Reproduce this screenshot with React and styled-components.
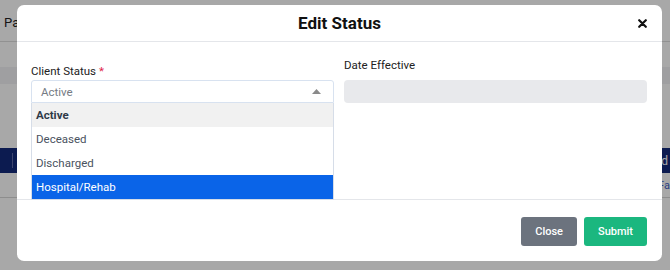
import React, { useState } from "react";
import styled, { createGlobalStyle } from "styled-components";

const GlobalStyle = createGlobalStyle`
  html, body {
    margin: 0;
    padding: 0;
    width: 670px;
    height: 270px;
    overflow: hidden;
    font-family: Roboto, "Liberation Sans", sans-serif;
  }
`;

const options = ["Active", "Deceased", "Discharged", "Hospital/Rehab"];

const App = () => {
  const [status] = useState("Active");
  const [hovered, setHovered] = useState("Hospital/Rehab");

  return (
    <Screen>
      <GlobalStyle />
      <BackPage>
        <TopBar>
          <BackTab>Pa</BackTab>
        </TopBar>
        <FilterBand />
        <Spacer />
        <TableHead>
          <HeadDivider />
          <HeadEnd>d</HeadEnd>
        </TableHead>
        <LinkRow>
          <LinkText>Fa</LinkText>
        </LinkRow>
      </BackPage>

      <Overlay>
        <Modal>
          <Header>
            <Title>Edit Status</Title>
            <CloseX aria-label="close">
              <svg width="9" height="9" viewBox="0 0 9 9">
                <path
                  d="M1.2 1.2 L7.8 7.8 M7.8 1.2 L1.2 7.8"
                  stroke="#111"
                  strokeWidth="2.2"
                  strokeLinecap="round"
                />
              </svg>
            </CloseX>
          </Header>
          <Body>
            <Field>
              <Label $offset={6}>
                Client Status <Required>*</Required>
              </Label>
              <SelectWrap>
                <SelectBox>
                  <span>{status}</span>
                  <svg width="9" height="5" viewBox="0 0 9 5">
                    <path d="M0 5 L4.5 0 L9 5 Z" fill="#8a8a8a" />
                  </svg>
                </SelectBox>
                <Menu>
                  {options.map((opt) => (
                    <Option
                      key={opt}
                      $selected={opt === status}
                      $active={opt === hovered}
                      onMouseEnter={() => setHovered(opt)}
                    >
                      {opt}
                    </Option>
                  ))}
                </Menu>
              </SelectWrap>
            </Field>
            <Field>
              <Label>Date Effective</Label>
              <DisabledInput disabled />
            </Field>
          </Body>
          <Footer>
            <Button $tone="#6c737e">Close</Button>
            <Button $tone="#1bb77f">Submit</Button>
          </Footer>
        </Modal>
      </Overlay>
    </Screen>
  );
};

const Screen = styled.div`
  position: relative;
  width: 670px;
  height: 270px;
  background: #ffffff;
  overflow: hidden;
`;

const BackPage = styled.div`
  display: flex;
  flex-direction: column;
  height: 100%;
`;

const TopBar = styled.div`
  height: 37px;
  display: flex;
  align-items: center;
  padding-left: 4px;
  border-bottom: 1px solid #dcdcdc;
  margin-top: 4px;
`;

const BackTab = styled.span`
  font-size: 13px;
  color: #222;
`;

const FilterBand = styled.div`
  height: 17px;
  margin-top: 25px;
  background: #f2f2f4;
`;

const Spacer = styled.div`
  height: 64px;
`;

const TableHead = styled.div`
  height: 25px;
  background: #13297a;
  display: flex;
  align-items: center;
  justify-content: space-between;
`;

const HeadDivider = styled.span`
  width: 1px;
  height: 15px;
  margin-left: 12px;
  background: #5d6aa8;
`;

const HeadEnd = styled.span`
  color: #fff;
  font-size: 12px;
  padding-right: 2px;
`;

const LinkRow = styled.div`
  height: 24px;
  display: flex;
  justify-content: flex-end;
  align-items: center;
  border-bottom: 1px solid #d6d6d6;
`;

const LinkText = styled.span`
  font-size: 11px;
  color: #3f63c6;
`;

const Overlay = styled.div`
  position: absolute;
  inset: 0;
  background: rgba(0, 0, 0, 0.34);
  padding: 5px 8px 9px 17px;
  box-sizing: border-box;
`;

const Modal = styled.div`
  width: 645px;
  height: 256px;
  background: #fff;
  border-radius: 7px;
  display: flex;
  flex-direction: column;
`;

const Header = styled.div`
  position: relative;
  height: 36px;
  border-bottom: 1px solid #e4e6ea;
  display: flex;
  align-items: center;
  justify-content: center;
`;

const Title = styled.h2`
  margin: 0;
  font-size: 17px;
  font-weight: 700;
  color: #111;
`;

const CloseX = styled.button`
  position: absolute;
  right: 15px;
  top: 14px;
  padding: 0;
  border: none;
  background: none;
  line-height: 0;
  cursor: pointer;
`;

const Body = styled.div`
  height: 158px;
  border-bottom: 1px solid #e4e6ea;
  display: grid;
  grid-template-columns: 303px 303px;
  column-gap: 10px;
  padding: 16px 14px 0;
  box-sizing: border-box;
  align-items: start;
`;

const Field = styled.div`
  display: flex;
  flex-direction: column;
`;

const Label = styled.label`
  font-size: 11.5px;
  color: #222;
  line-height: 14px;
  margin-top: ${(p) => p.$offset || 0}px;
  margin-bottom: ${(p) => (p.$offset ? 2 : 8)}px;
`;

const Required = styled.span`
  color: #e0224a;
`;

const SelectWrap = styled.div`
  position: relative;
`;

const SelectBox = styled.div`
  height: 23px;
  box-sizing: border-box;
  border: 1px solid #d8e2f0;
  border-radius: 3px 3px 0 0;
  display: flex;
  align-items: center;
  justify-content: space-between;
  padding: 0 12px 0 9px;
  font-size: 11.5px;
  color: #757b84;
  background: #fff;
`;

const Menu = styled.ul`
  position: absolute;
  top: 23px;
  left: 0;
  right: 0;
  margin: 0;
  padding: 0;
  list-style: none;
  background: #fff;
  border: 1px solid #d6dde8;
  border-top: none;
  z-index: 2;
`;

const Option = styled.li`
  height: 24px;
  line-height: 24px;
  padding-left: 4px;
  font-size: 11.5px;
  font-weight: ${(p) => (p.$selected ? 700 : 400)};
  color: ${(p) => (p.$active ? "#fff" : p.$selected ? "#2f3a48" : "#4a5260")};
  background: ${(p) => (p.$active ? "#0a64e8" : p.$selected ? "#f1f1f1" : "#fff")};
`;

const DisabledInput = styled.input`
  height: 23px;
  box-sizing: border-box;
  border: none;
  border-radius: 4px;
  background: #e8e9ec;
  padding: 0 8px;
`;

const Footer = styled.div`
  flex: 1;
  display: flex;
  justify-content: flex-end;
  align-items: center;
  gap: 7px;
  padding: 2px 15px 0 0;
`;

const Button = styled.button`
  height: 29px;
  padding: 0 14px;
  border: none;
  border-radius: 3px;
  background: ${(p) => p.$tone};
  color: #fff;
  font-family: Roboto, "Liberation Sans", sans-serif;
  font-size: 11px;
  font-weight: 500;
  cursor: pointer;
`;

export default App;
